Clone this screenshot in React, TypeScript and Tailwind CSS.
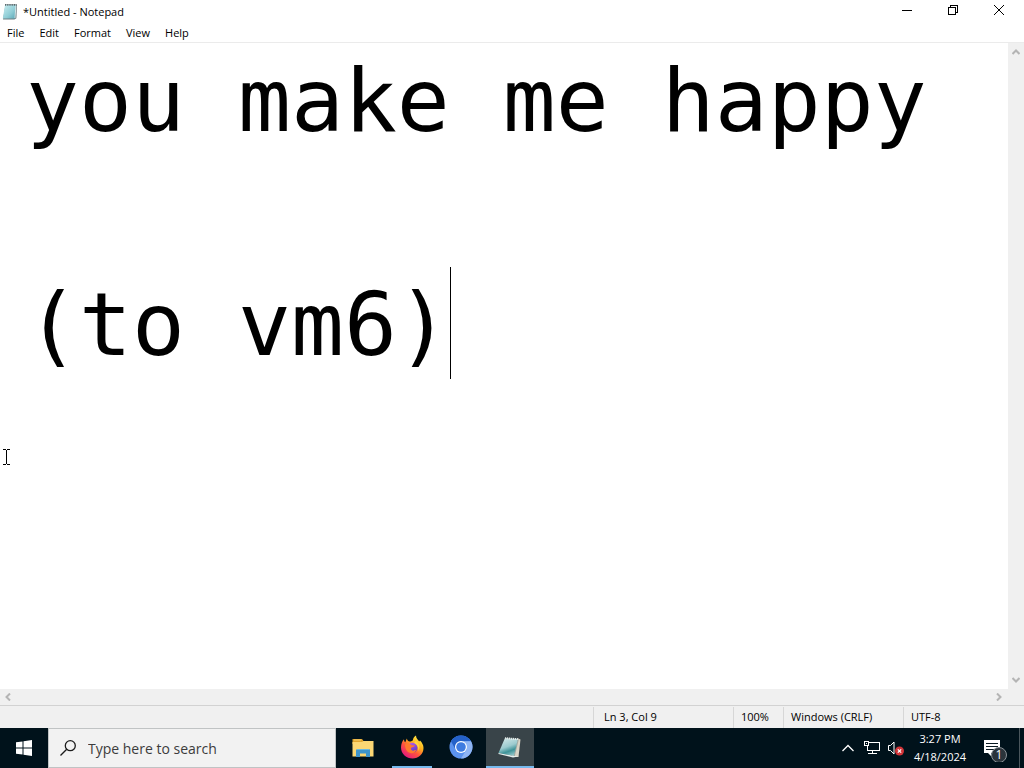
import { useState } from "react";
import type { ReactNode } from "react";

const menus = ["File", "Edit", "Format", "View", "Help"];

function NotepadIcon() {
  return (
    <svg className="h-4 w-4" viewBox="0 0 16 16" aria-hidden="true">
      <defs>
        <linearGradient id="pad" x1="0" y1="0" x2="1" y2="1">
          <stop offset="0" stopColor="#c9edf0" />
          <stop offset="0.6" stopColor="#8fcdd6" />
          <stop offset="1" stopColor="#5ba6b5" />
        </linearGradient>
      </defs>
      <path d="M3.5 .5h11.500l-.6 13.800-2 1.200H1z" fill="#6f7f83" />
      <path d="M3 1h11l-1 13.500H.8z" fill="url(#pad)" />
      <path d="M13.900 1.500 13 14" stroke="#e9f3f4" strokeWidth=".8" />
      <path d="M3 .9h11.500" stroke="#5a6a6e" strokeWidth="1.8" strokeDasharray="1 .8" />
    </svg>
  );
}

function TaskNotepadIcon() {
  return (
    <svg className="h-6 w-6" viewBox="0 0 24 24" aria-hidden="true">
      <defs>
        <linearGradient id="sheet" x1="0.2" y1="0" x2="0.6" y2="1">
          <stop offset="0" stopColor="#d4e9e9" />
          <stop offset="0.5" stopColor="#9bcace" />
          <stop offset="0.75" stopColor="#3e9398" />
          <stop offset="1" stopColor="#8fc3c5" />
        </linearGradient>
      </defs>
      <path d="M20 3.500 22.500 4.500 20.500 22 14 22z" fill="#d9d4c6" />
      <path d="M7 3 20 4 16 21 0.500 18z" fill="url(#sheet)" />
      <path d="M.5 18 16 21 20.500 21.500 15 22.500.5 19z" fill="#e8f1ef" />
      <path d="M7 3.200 20.500 4.200" stroke="#e3e9e7" strokeWidth="2" strokeDasharray="1.2 .8" />
      <path d="M20.3 4.500 16.3 21" stroke="#5c6c6d" strokeWidth=".4" />
    </svg>
  );
}

function FolderIcon() {
  return (
    <svg className="h-6 w-6" viewBox="0 0 24 24" aria-hidden="true">
      <path d="M1.500 4H11l1.500 2H22v3H1.500z" fill="#e0a52f" />
      <path d="M3 5h7" stroke="#f6cf6c" />
      <path d="M1.500 7H11l1.500-1H22.500v15.500h-21z" fill="#fbd774" />
      <path d="M5 22v-6.500Q5 14 6.500 14h11.500Q19 14 19 15.500V22h-4v-3.500H9V22z" fill="#3e95cb" />
      <path d="M6 14h12v1H6z" fill="#6ab8e1" />
    </svg>
  );
}

function FirefoxIcon() {
  return (
    <svg className="h-6 w-6" viewBox="0 0 24 24" aria-hidden="true">
      <defs>
        <linearGradient id="flame" x1="0.85" y1="0.05" x2="0.2" y2="0.95">
          <stop offset="0" stopColor="#fff04b" />
          <stop offset="0.35" stopColor="#ffb21c" />
          <stop offset="0.62" stopColor="#ff553c" />
          <stop offset="1" stopColor="#e31580" />
        </linearGradient>
        <linearGradient id="globe" x1="0.2" y1="0" x2="0.6" y2="1">
          <stop offset="0" stopColor="#b85be8" />
          <stop offset="1" stopColor="#583acb" />
        </linearGradient>
      </defs>
      <path
        d="M4 4.200C4 6 4.700 7 5.300 7.300L6.800 3.500C7.300 5.500 8.500 6.200 9.500 6.500 10.800 6.500 12 6 12.800 5.500 13 3 14.700 1 16 .5 16 3.500 18.200 4.500 19.200 6.500L20 5.500C22 7.500 23.500 10 23.500 13 23.500 19 18.500 23.500 12.500 23.500S1 19 1 12.500C1 9 2.300 6 4 4.200z"
        fill="url(#flame)"
      />
      <circle cx="12.500" cy="12.800" r="5" fill="url(#globe)" />
      <path
        d="M5 9.500C7.500 7.800 10 8.500 11.500 10.200L15 10.500C14 12.300 12.200 11.800 11 13 10.200 15 13 17 16.500 14.500 15.500 18.500 10 19.500 7 16 5.500 14 5 11.500 5 9.500z"
        fill="#ff7a2d"
      />
      <path d="M15.500 6C19 8 20.500 12 18.500 16 18.300 12 17.500 10 14 8z" fill="#ffd63c" />
    </svg>
  );
}

function ChromiumIcon() {
  return (
    <svg className="h-6 w-6" viewBox="0 0 24 24" aria-hidden="true">
      <circle cx="12" cy="12" r="11.500" fill="#5b92ee" />
      <path d="M2 6.300A11.500 11.500 0 0 1 22 6.300H12A6 6 0 0 0 6.800 15z" fill="#2461c9" />
      <path d="M22 6.300A11.500 11.500 0 0 1 12 23.500L17.200 15A6 6 0 0 0 12 6.300z" fill="#8fb5f4" />
      <circle cx="12" cy="12" r="6" fill="#fff" />
      <circle cx="12" cy="12" r="4.800" fill="#3e7be0" />
    </svg>
  );
}

function Chevron({ d }: { d: string }) {
  return (
    <svg className="h-2 w-2" viewBox="0 0 8 8" fill="none" stroke="#b4b4b4" strokeWidth="2" aria-hidden="true">
      <path d={d} />
    </svg>
  );
}

function WindowButton({ label, children }: { label: string; children: ReactNode }) {
  return (
    <button aria-label={label} className="flex h-full w-[46px] items-center justify-center hover:bg-gray-200">
      <svg
        className="h-3 w-3"
        viewBox="0 0 12 12"
        fill="none"
        stroke="#000"
        shapeRendering="crispEdges"
        aria-hidden="true"
      >
        {children}
      </svg>
    </button>
  );
}

function TaskButton({ label, state, children }: { label: string; state?: "open" | "active"; children: ReactNode }) {
  return (
    <button
      aria-label={label}
      className={
        "flex h-full w-12 flex-col items-center " + (state === "active" ? "bg-[#394449]" : "hover:bg-[#1b292f]")
      }
    >
      <span className="flex flex-1 items-center">{children}</span>
      <span
        className={
          state === "active" ? "h-0.5 w-full bg-[#76b9ed]" : state === "open" ? "h-0.5 w-10 bg-[#76b9ed]" : "h-0.5 w-10"
        }
      />
    </button>
  );
}

export default function App() {
  const [text, setText] = useState("you make me happy\n\n(to vm6)");

  return (
    <div className="flex h-screen flex-col overflow-hidden bg-white font-['Open_Sans','Noto_Sans',sans-serif] text-[11px] text-black">
      <header className="flex h-6 shrink-0 items-center justify-between pr-0.5 pl-0.5">
        <div className="flex items-center gap-[5px]">
          <NotepadIcon />
          <h1>*Untitled - Notepad</h1>
        </div>
        <div className="flex h-5 self-start">
          <WindowButton label="Minimize">
            <path d="M1 6.500h10" />
          </WindowButton>
          <WindowButton label="Restore">
            <path d="M1.500 3.500h7v7h-7zM3.500 3.500v-2h7v7h-2" />
          </WindowButton>
          <WindowButton label="Close">
            <path d="M1 1l10 10M11 1L1 11" shapeRendering="auto" />
          </WindowButton>
        </div>
      </header>

      <nav className="flex h-[19px] shrink-0 items-center gap-[15px] border-b border-[#ebebeb] pl-[7px] leading-4">
        {menus.map((m) => (
          <button key={m} className="hover:bg-sky-100">
            {m}
          </button>
        ))}
      </nav>

      <main className="flex min-h-0 flex-1">
        <div className="relative min-w-0 flex-1">
          <textarea
            aria-label="Text editor"
            value={text}
            onChange={(e) => setText(e.target.value)}
            spellCheck={false}
            wrap="off"
            className="block h-full w-full resize-none overflow-hidden bg-white pt-0.5 pl-[26px] font-['DejaVu_Sans_Mono',monospace] text-[88px] leading-[112px] outline-none"
          />
          <span className="pointer-events-none absolute top-56 left-[450px] h-28 w-px bg-black" />
          <svg
            className="pointer-events-none absolute top-[406px] left-0.5 h-4 w-2"
            viewBox="0 0 8 16"
            fill="none"
            stroke="#000"
            shapeRendering="crispEdges"
            aria-hidden="true"
          >
            <path d="M1 .5h3M5 .5h3M4.500 1v14M1 15.500h3M5 15.500h3" />
          </svg>
        </div>
        <div className="flex w-4 shrink-0 flex-col items-center justify-between bg-[#f0f0f0] py-[5px]">
          <button aria-label="Scroll up">
            <Chevron d="M.500 6 4 2.500 7.500 6" />
          </button>
          <button aria-label="Scroll down">
            <Chevron d="M.500 2 4 5.500 7.500 2" />
          </button>
        </div>
      </main>

      <div className="flex h-4 shrink-0 items-center justify-between bg-[#f0f0f0] pr-[21px] pl-1">
        <button aria-label="Scroll left">
          <Chevron d="M6 .500 2.500 4 6 7.500" />
        </button>
        <button aria-label="Scroll right">
          <Chevron d="M2 .500 5.500 4 2 7.500" />
        </button>
      </div>

      <footer className="flex h-[23px] shrink-0 justify-end border-t border-[#d2d2d2] bg-[#f0f0f0] pt-px">
        <div className="flex w-[140px] items-center border-l border-[#d7d7d7] pl-2.5">Ln 3, Col 9</div>
        <div className="flex w-[50px] items-center border-l border-[#d7d7d7] pl-[7px]">100%</div>
        <div className="flex w-[120px] items-center border-l border-[#d7d7d7] pl-[7px]">Windows (CRLF)</div>
        <div className="flex w-[121px] items-center border-l border-[#d7d7d7] pl-[7px]">UTF-8</div>
      </footer>

      <div className="flex h-10 shrink-0 items-center bg-[#00121b] text-white">
        <button aria-label="Start" className="flex h-full w-12 items-center justify-center">
          <svg className="h-4 w-4" viewBox="0 0 16 16" fill="#fff" aria-hidden="true">
            <path d="M0 2.300 6.500 1.400V7.500H0zM7.500 1.200 16 0V7.500H7.500zM0 8.500H6.500V14.600L0 13.700zM7.500 8.500H16V16L7.500 14.800z" />
          </svg>
        </button>
        <label className="flex h-full w-72 items-center gap-3 border border-[#c0c3c4] bg-[#f2f2f2] pl-[11px]">
          <svg className="h-4 w-4" viewBox="0 0 16 16" fill="none" stroke="#1c1c1c" strokeWidth="1.300" aria-hidden="true">
            <circle cx="10.300" cy="5.700" r="5" />
            <path d="M6.700 9.300.500 15.500" />
          </svg>
          <input
            aria-label="Search"
            placeholder="Type here to search"
            className="min-w-0 flex-1 bg-transparent text-[14px] text-black outline-none placeholder:text-[#3c3c3c]"
          />
        </label>
        <div className="flex h-full gap-px pl-[3px]">
          <TaskButton label="File Explorer">
            <FolderIcon />
          </TaskButton>
          <TaskButton label="Firefox" state="open">
            <FirefoxIcon />
          </TaskButton>
          <TaskButton label="Chromium">
            <ChromiumIcon />
          </TaskButton>
          <TaskButton label="Notepad" state="active">
            <TaskNotepadIcon />
          </TaskButton>
        </div>
        <div className="ml-auto flex h-full items-center">
          <button aria-label="Show hidden icons" className="mr-2">
            <svg className="h-3 w-3.5" viewBox="0 0 14 12" fill="none" stroke="#fff" strokeWidth="1.300" aria-hidden="true">
              <path d="M1.500 9 7 3.500 12.500 9" />
            </svg>
          </button>
          <button aria-label="Network" className="mr-1.5">
            <svg
              className="h-4 w-[18px]"
              viewBox="0 0 18 16"
              fill="none"
              stroke="#fff"
              shapeRendering="crispEdges"
              aria-hidden="true"
            >
              <path d="M6 2.500H16.500V10.500H4.500V6M9.500 11v3M5 13.500h9M1.500 1.500h4v4h-4zM3.500 3v1" />
            </svg>
          </button>
          <button aria-label="Speakers muted" className="mr-2">
            <svg className="h-4 w-[18px]" viewBox="0 0 18 16" fill="none" aria-hidden="true">
              <path d="M1.500 5.500H3.500L7 2V14L3.500 10.500H1.500z" stroke="#fff" />
              <circle cx="12.500" cy="11" r="4.500" fill="#d13438" />
              <path d="M10.800 9.300 14.200 12.700M14.200 9.300 10.800 12.700" stroke="#fff" strokeWidth="1.200" />
            </svg>
          </button>
          <div className="flex w-[54px] flex-col items-center leading-[18px] whitespace-nowrap">
            <time>3:27 PM</time>
            <time>4/18/2024</time>
          </div>
          <button aria-label="1 new notification" className="mr-2 ml-4">
            <svg className="h-7 w-7" viewBox="0 0 28 28" aria-hidden="true">
              <path d="M1 6h16v13H8v3l-3-3H1z" fill="#fff" />
              <path d="M3 9.500h12M3 12.500h12M3 15.500h8" stroke="#0a1a22" />
              <circle cx="16" cy="21" r="7.500" fill="#2b343b" stroke="#8b9398" />
              <text x="16" y="25" fill="#fff" fontSize="12" textAnchor="middle">
                1
              </text>
            </svg>
          </button>
          <button aria-label="Show desktop" className="h-full w-[5px] border-l border-[#4a565c]" />
        </div>
      </div>
    </div>
  );
}
